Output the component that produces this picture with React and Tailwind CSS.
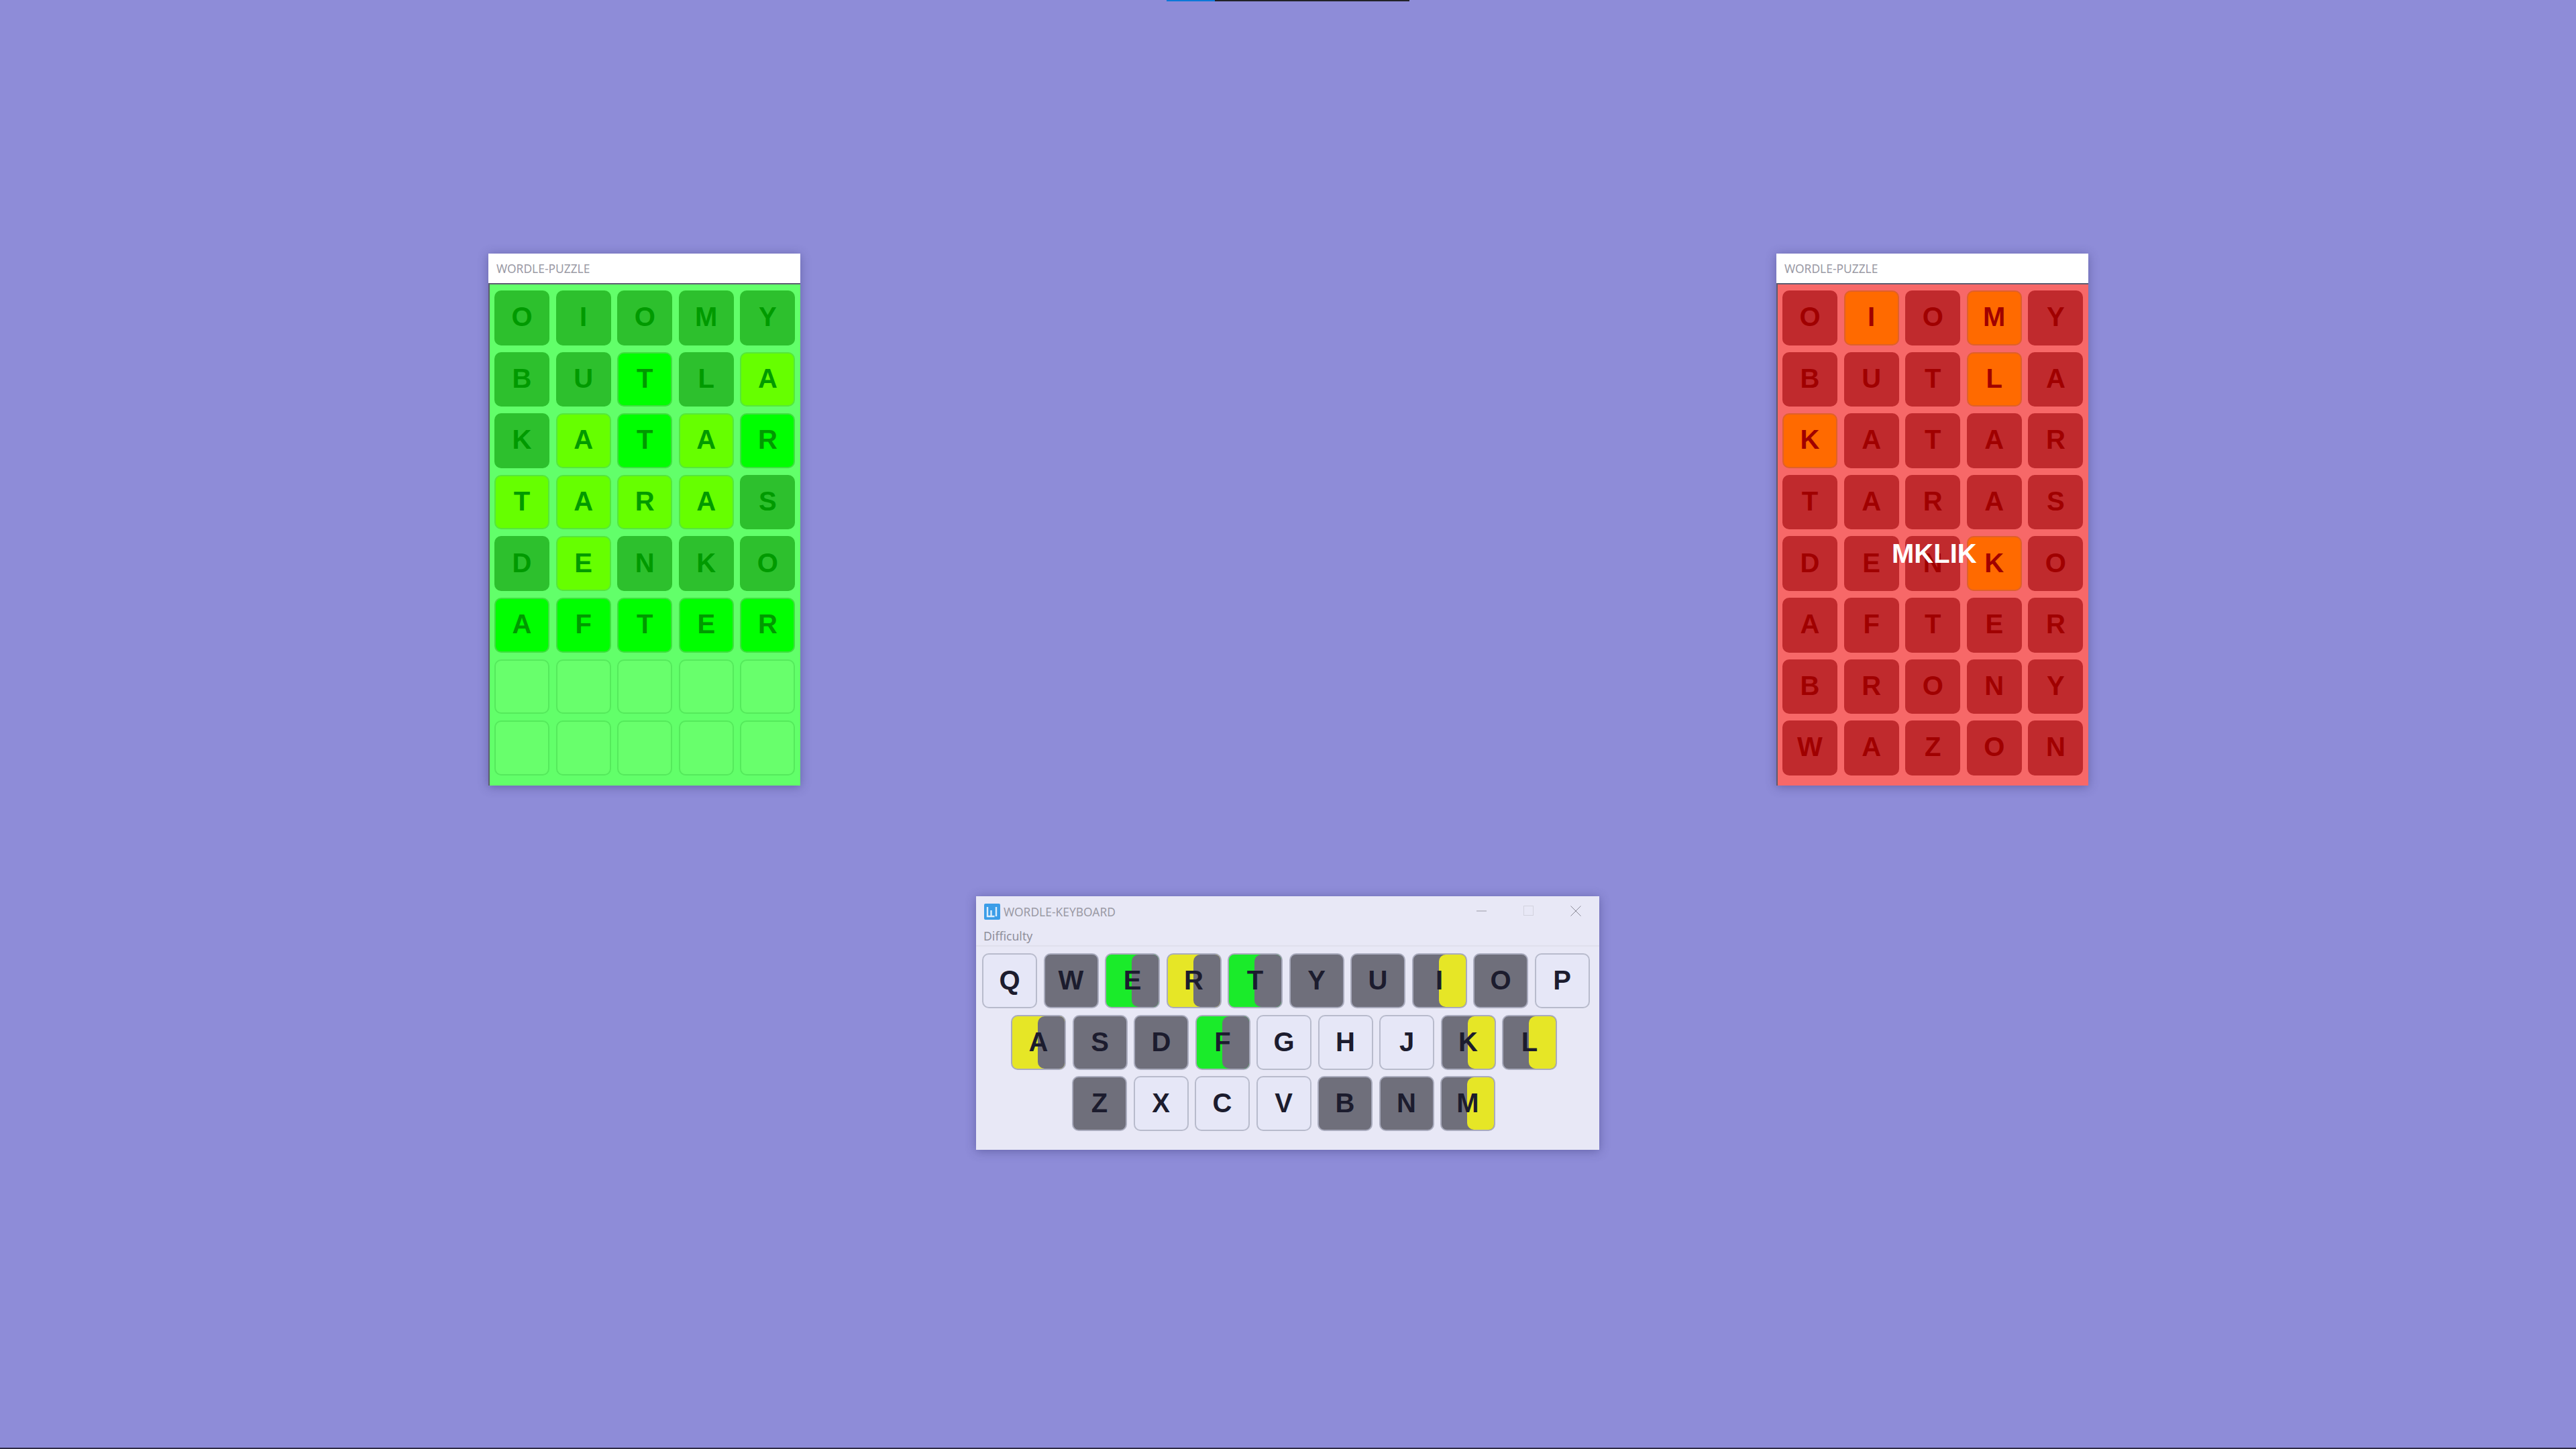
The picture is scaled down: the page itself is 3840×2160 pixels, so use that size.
import React from "react";

const sans = "font-['Liberation_Sans',Arial,sans-serif]";
const uiFont = "font-['Noto_Sans',sans-serif]";

const greenRows = [
  ["O", "I", "O", "M", "Y"],
  ["B", "U", "T", "L", "A"],
  ["K", "A", "T", "A", "R"],
  ["T", "A", "R", "A", "S"],
  ["D", "E", "N", "K", "O"],
  ["A", "F", "T", "E", "R"],
  ["", "", "", "", ""],
  ["", "", "", "", ""],
];

// d = wrong, b = right spot, y = wrong spot, e = empty
const greenMarks = ["ddddd", "ddbdy", "dybyb", "yyyyd", "dyddd", "bbbbb", "eeeee", "eeeee"];

const redRows = [
  ["O", "I", "O", "M", "Y"],
  ["B", "U", "T", "L", "A"],
  ["K", "A", "T", "A", "R"],
  ["T", "A", "R", "A", "S"],
  ["D", "E", "N", "K", "O"],
  ["A", "F", "T", "E", "R"],
  ["B", "R", "O", "N", "Y"],
  ["W", "A", "Z", "O", "N"],
];

const redMarks = ["dodod", "dddod", "odddd", "ddddd", "dddod", "ddddd", "ddddd", "ddddd"];

const cellStyles = {
  d: "bg-[#2dc02d] text-[#009a00]",
  b: "bg-[#00ff00] text-[#009a00] border-2 border-[#3fe03f]",
  y: "bg-[#66ff00] text-[#009a00] border-2 border-[#55e83a]",
  e: "bg-[#68ff6c] border-2 border-[#55ea5c]",
};

const redCellStyles = {
  d: "bg-[#c02a2d] text-[#a00000]",
  o: "bg-[#ff6a00] text-[#a00000] border-2 border-[#e0602a]",
};

function Cell({ letter, className }) {
  return (
    <div
      className={`w-[82px] h-[81.6px] pb-[3px] rounded-[10px] flex items-center justify-center text-[40px] font-bold ${sans} ${className}`}
    >
      {letter}
    </div>
  );
}

function PuzzleWindow({ rows, marks, styles, panel, children }) {
  return (
    <div className="relative w-[465px] shadow-[0_2px_14px_rgba(50,50,110,0.45)]">
      <div className={`h-[46px] bg-white flex items-center pl-3 pt-[1px] text-[17.4px] text-[#9a9aa5] border-b-2 border-[#5c5c70] ${uiFont}`}>
        WORDLE-PUZZLE
      </div>
      <div className={`h-[747px] pl-[7px] pt-[9px] flex flex-col gap-[10px] border-l-2 border-[#5c5c70] ${panel}`}>
        {rows.map((row, i) => (
          <div key={i} className="flex gap-[9.6px]">
            {row.map((letter, j) => (
              <Cell key={j} letter={letter} className={styles[marks[i][j]]} />
            ))}
          </div>
        ))}
      </div>
      {children}
    </div>
  );
}

const keyRows = [
  { pad: "pl-[9px]", keys: [["Q"], ["W", "g"], ["E", "gn"], ["R", "yl"], ["T", "gn"], ["Y", "g"], ["U", "g"], ["I", "gy"], ["O", "g"], ["P"]] },
  { pad: "pl-[52px]", keys: [["A", "yl"], ["S", "g"], ["D", "g"], ["F", "gn"], ["G"], ["H"], ["J"], ["K", "gy"], ["L", "gy"]] },
  { pad: "pl-[143px]", keys: [["Z", "g"], ["X"], ["C"], ["V"], ["B", "g"], ["N", "g"], ["M", "gy"]] },
];

function Key({ letter, state }) {
  const base = {
    g: "bg-[#6f6f7b] border-[#a9abbd]",
    gn: "bg-[#1aeb2a] border-[#a9abbd]",
    yl: "bg-[#e6e626] border-[#a9abbd]",
    gy: "bg-[#6f6f7b] border-[#a9abbd]",
  }[state] || "bg-[#e6e7f7] border-[#b8bbcc]";

  return (
    <div className={`relative w-[82px] h-[82px] pb-[2px] rounded-[10px] border-2 overflow-hidden flex items-center justify-center ${base}`}>
      {(state === "gn" || state === "yl") && (
        <div className="absolute top-0 bottom-0 right-0 w-[40px] bg-[#6f6f7b] rounded-l-[10px]"></div>
      )}
      {state === "gy" && (
        <div className="absolute top-0 bottom-0 right-0 w-[40px] bg-[#e6e626] rounded-l-[10px]"></div>
      )}
      <span className={`relative text-[40px] font-bold text-[#1c1c2e] ${sans}`}>{letter}</span>
    </div>
  );
}

function KeyboardWindow() {
  return (
    <div className="w-[929px] h-[378px] bg-[#e8e8f6] shadow-[0_2px_14px_rgba(50,50,110,0.45)]">
      <div className={`h-[46px] flex items-center pl-3 pr-[27px] text-[17.4px] text-[#9a9aa5] ${uiFont}`}>
        <svg width="24" height="24" viewBox="0 0 24 24" className="mr-[5px]">
          <rect width="24" height="24" rx="2" fill="#3b9de8" />
          <path d="M5 5v14h5M10.5 10v9h5M18 5v14" fill="none" stroke="#dcecfb" strokeWidth="2.4" />
        </svg>
        <span>WORDLE-KEYBOARD</span>
        <div className="ml-auto mb-[2px] flex items-center gap-[54px]">
          <svg width="16" height="16" viewBox="0 0 16 16"><path d="M0 8h15" stroke="#9a9aa5" strokeWidth="1" /></svg>
          <svg width="16" height="16" viewBox="0 0 16 16"><rect x="0.5" y="0.5" width="14" height="14" fill="none" stroke="#d2d2de" /></svg>
          <svg width="16" height="16" viewBox="0 0 16 16"><path d="M0.5 0.5l15 15M15.5 0.5l-15 15" stroke="#8a8a96" strokeWidth="1" /></svg>
        </div>
      </div>
      <div className={`h-[29px] pl-[11px] flex items-center text-[17.6px] text-[#8f8f9b] border-b-2 border-[#e0e0ec] ${uiFont}`}>
        Difficulty
      </div>
      <div className="pt-[10px] flex flex-col gap-[9.6px]">
        {keyRows.map((row, i) => (
          <div key={i} className={`flex gap-[9.5px] ${row.pad}`}>
            {row.keys.map(([letter, state]) => (
              <Key key={letter} letter={letter} state={state} />
            ))}
          </div>
        ))}
      </div>
    </div>
  );
}

export default function App() {
  return (
    <div className="w-[3840px] h-[2160px] bg-[#8e8cd8] flex flex-col overflow-hidden">
      <div className="h-[2px] flex pl-[1739px]">
        <div className="w-[72px] bg-[#0b78d8]"></div>
        <div className="w-[290px] bg-[#222228]"></div>
      </div>
      <div className="flex justify-between pl-[728px] pr-[727px] pt-[376px]">
        <PuzzleWindow rows={greenRows} marks={greenMarks} styles={cellStyles} panel="bg-[#62ff6a]" />
        <PuzzleWindow rows={redRows} marks={redMarks} styles={redCellStyles} panel="bg-[#f76868]">
          <span className={`absolute left-[172px] top-[424px] text-[40px] leading-[46px] font-bold text-white ${sans}`}>MKLIK</span>
        </PuzzleWindow>
      </div>
      <div className="pl-[1455px] pt-[165px]">
        <KeyboardWindow />
      </div>
      <div className="mt-auto h-[2px] bg-[#2e2a44]"></div>
    </div>
  );
}
